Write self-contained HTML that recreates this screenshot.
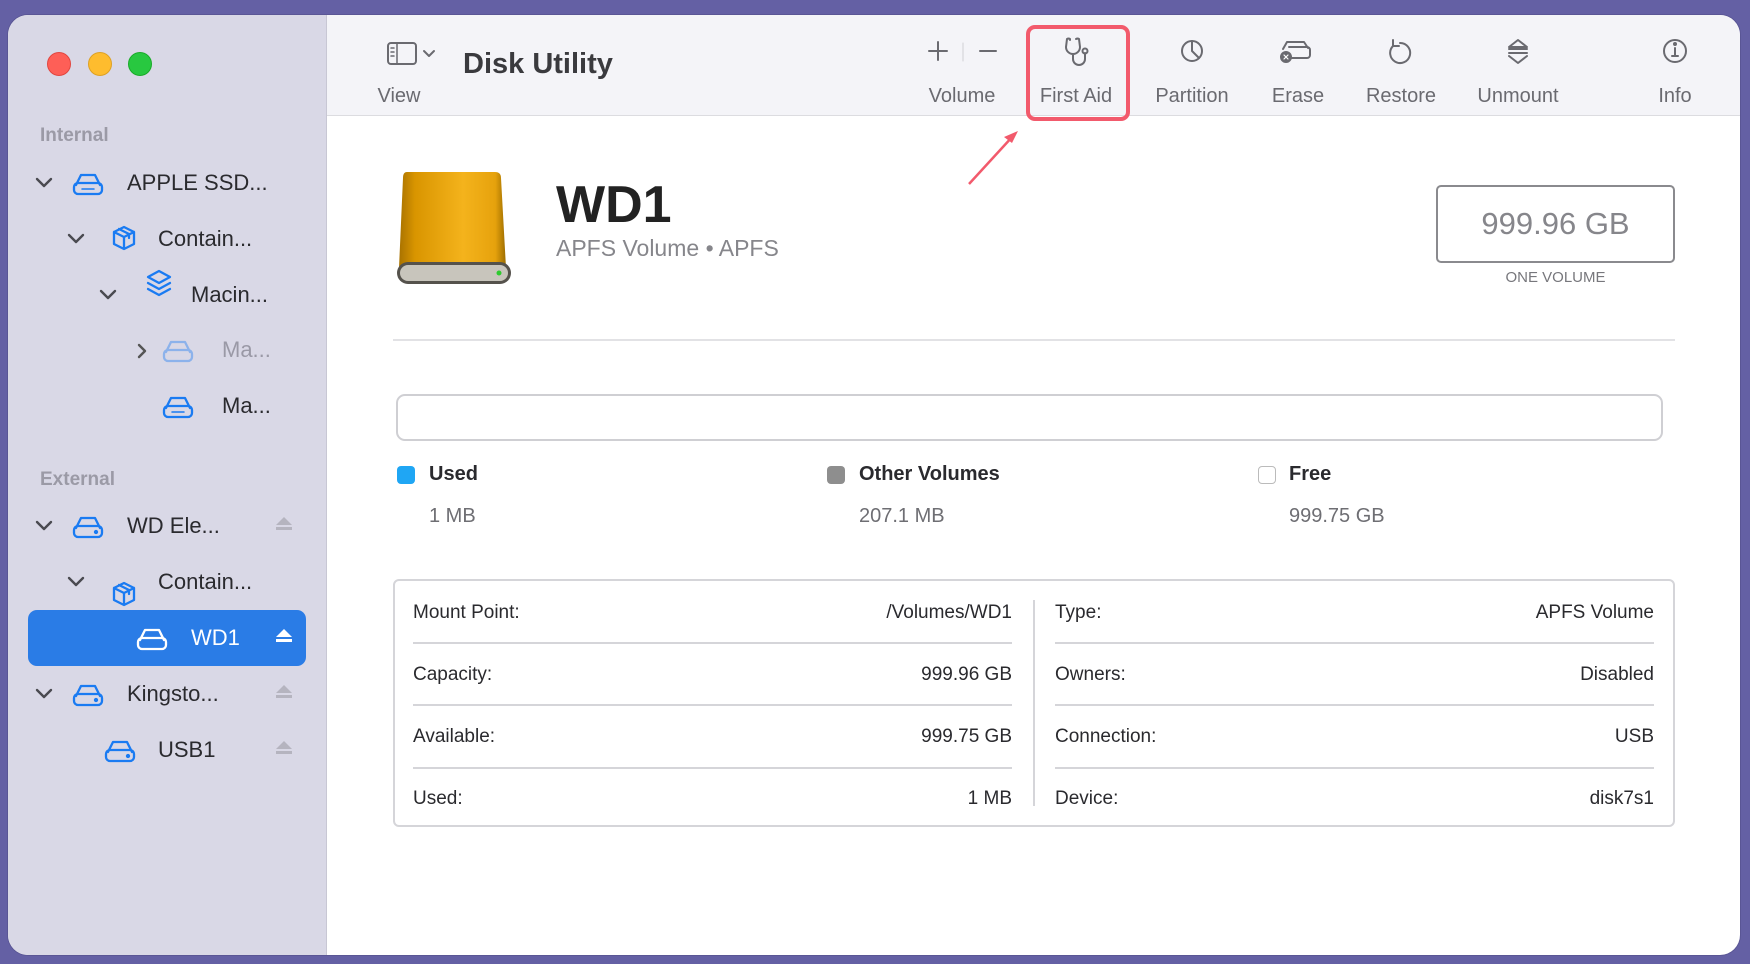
<!DOCTYPE html>
<html><head><meta charset="utf-8"><style>
*{margin:0;padding:0;box-sizing:border-box}
body{width:1750px;height:964px;background:#6460a4;font-family:"Liberation Sans",sans-serif;position:relative;overflow:hidden}
.win{position:absolute;left:8px;top:15px;width:1732px;height:940px;border-radius:20px;overflow:hidden;background:#fff;box-shadow:0 0 0 1px #5a5695}
.side{position:absolute;left:0;top:0;width:319px;height:100%;background:#d9d8e6;border-right:1px solid #c8c7d4}
.tl{position:absolute;top:37px;width:24px;height:24px;border-radius:50%}
.t{position:absolute;font-size:22px;color:#2a2a2e;white-space:nowrap}
.h{position:absolute;font-size:19px;font-weight:bold;color:#9b9aa6}
.tool{position:absolute;left:319px;top:0;right:0;height:101px;background:#f4f4f8;border-bottom:1px solid #dcdce0}
.lab{position:absolute;top:70px;font-size:20px;color:#6a6a70;transform:translateX(-50%);white-space:nowrap}
.abs{position:absolute}
.tr{position:absolute;font-size:19px;color:#2a2a2e}
</style></head><body>
<div class="win">
<div class="side">
<div class="tl" style="left:39px;background:#fe5f57;border:1px solid #e2463f"></div>
<div class="tl" style="left:80px;background:#febc2e;border:1px solid #dea123"></div>
<div class="tl" style="left:120px;background:#28c840;border:1px solid #1aab29"></div>
<div class="h" style="left:32px;top:110px">Internal</div>
<div class="h" style="left:32px;top:454px">External</div>
<div class="abs" style="left:20px;top:595px;width:278px;height:56px;background:#2a7ce6;border-radius:9px"></div>
<svg class="abs" style="left:0;top:-4px" width="319" height="940" fill="none" stroke-linecap="round" stroke-linejoin="round">
<g stroke="#4a4a50" stroke-width="2.4">
<path d="M29 168l7 7 7-7"/><path d="M61 224l7 7 7-7"/><path d="M93 280l7 7 7-7"/>
<path d="M131 334l6 6-6 6" stroke="#555"/>
<path d="M29 511l7 7 7-7"/><path d="M61 567l7 7 7-7"/><path d="M29 679l7 7 7-7"/>
</g>
<g stroke="#1a7bf2" stroke-width="2.3">
<path d="M70 172h20a4 4 0 0 1 4 4v3a4 4 0 0 1-4 4H70a4 4 0 0 1-4-4v-3a4 4 0 0 1 4-4zM68 174l5-10h14l5 10"/><path d="M74 178h12" stroke-width="1.5"/>
<path d="M106 221l10-5 10 5v12l-10 5-10-5zM106 221l10 5 10-5M116 226v12M111 218l10 5v4"/>
<path d="M140 266l11-6 11 6-11 6zM140 272l11 6 11-6M140 278l11 6 11-6"/>
<path d="M160 395h20a4 4 0 0 1 4 4v3a4 4 0 0 1-4 4h-20a4 4 0 0 1-4-4v-3a4 4 0 0 1 4-4zM158 397l5-10h14l5 10"/><path d="M164 401h12" stroke-width="1.5"/>
<g opacity=".4"><path d="M160 339h20a4 4 0 0 1 4 4v3a4 4 0 0 1-4 4h-20a4 4 0 0 1-4-4v-3a4 4 0 0 1 4-4zM158 341l5-10h14l5 10"/></g>
<path d="M70 515h20a4 4 0 0 1 4 4v3a4 4 0 0 1-4 4H70a4 4 0 0 1-4-4v-3a4 4 0 0 1 4-4zM68 517l5-10h14l5 10"/><circle cx="88" cy="521" r="1" fill="#1a7bf2"/>
<path d="M106 577l10-5 10 5v12l-10 5-10-5zM106 577l10 5 10-5M116 582v12M111 574l10 5v4"/>
<path d="M70 683h20a4 4 0 0 1 4 4v3a4 4 0 0 1-4 4H70a4 4 0 0 1-4-4v-3a4 4 0 0 1 4-4zM68 685l5-10h14l5 10"/><circle cx="88" cy="689" r="1" fill="#1a7bf2"/>
<path d="M102 739h20a4 4 0 0 1 4 4v3a4 4 0 0 1-4 4h-20a4 4 0 0 1-4-4v-3a4 4 0 0 1 4-4zM100 741l5-10h14l5 10"/><circle cx="120" cy="745" r="1" fill="#1a7bf2"/>
</g>
<path d="M134 627h20a4 4 0 0 1 4 4v3a4 4 0 0 1-4 4h-20a4 4 0 0 1-4-4v-3a4 4 0 0 1 4-4zM132 629l5-10h14l5 10" stroke="#fff" stroke-width="2.3"/>
<g fill="#b5b4bf"><path d="M268 514l8-8 8 8z"/><rect x="268" y="516" width="16" height="3"/>
<path d="M268 682l8-8 8 8z"/><rect x="268" y="684" width="16" height="3"/>
<path d="M268 738l8-8 8 8z"/><rect x="268" y="740" width="16" height="3"/></g>
<g fill="#fff"><path d="M268 626l8-8 8 8z"/><rect x="268" y="628" width="16" height="3"/></g>
</svg>
<div class="t" style="left:119px;top:155px">APPLE SSD...</div>
<div class="t" style="left:150px;top:211px">Contain...</div>
<div class="t" style="left:183px;top:267px">Macin...</div>
<div class="t" style="left:214px;top:322px;color:#9a99a6">Ma...</div>
<div class="t" style="left:214px;top:378px">Ma...</div>
<div class="t" style="left:119px;top:498px">WD Ele...</div>
<div class="t" style="left:150px;top:554px">Contain...</div>
<div class="t" style="left:183px;top:610px;color:#fff">WD1</div>
<div class="t" style="left:119px;top:666px">Kingsto...</div>
<div class="t" style="left:150px;top:722px">USB1</div>
</div>
<div class="tool">
<svg class="abs" style="left:0;top:0" width="1413" height="101" fill="none" stroke="#6a6a70" stroke-width="2" stroke-linecap="round" stroke-linejoin="round">
<g transform="translate(10,0)"><rect x="51" y="28" width="28" height="21" rx="3"/><path d="M60 28v21M54 33h3M54 37h3M54 41h3" stroke-width="1.5"/>
<path d="M87 36l5 5 5-5"/></g>
<g transform="translate(-8,0)"><path d="M619 27v18M610 36h18M661 36h16"/><path d="M644 28v18" stroke="#d0d0d5" stroke-width="1"/></g>
<g transform="translate(13,0)"><path d="M730 25v-1a3 3 0 0 0-3 0l-1 8a7 7 0 0 0 14 0l-1-8a3 3 0 0 0-3 0M733 39v5a6 6 0 0 0 12 0v-6"/><circle cx="745" cy="36" r="2.5"/></g>
<g transform="translate(12,0)"><circle cx="853" cy="36" r="10"/><path d="M853 26v10l7 7"/></g>
<g transform="translate(7,0)"><path d="M955 32h18a3 3 0 0 1 3 3v5a3 3 0 0 1-3 3h-18M949 34l4-7h17l4 6"/><circle cx="952" cy="42" r="5" fill="#6a6a70"/><path d="M950 40l4 4M954 40l-4 4" stroke="#fff" stroke-width="1.2"/></g>
<g transform="translate(23,0)"><path d="M1050 28a10 10 0 1 1-7 3M1043 25v6h6"/></g>
<g transform="translate(10,0)"><path d="M1181 25l-9 7h18zM1172 34h18M1172 38h18M1172 41l9 7 9-7"/></g>
<g transform="translate(-8,0)"><circle cx="1356" cy="36" r="11"/><path d="M1356 33v8M1353 41h6"/><circle cx="1356" cy="29" r="1" fill="#6a6a70"/></g>
</svg>
<div class="abs" style="left:136px;top:33px;font-size:29px;font-weight:bold;color:#3a3a3e">Disk Utility</div>
<div class="lab" style="left:72px">View</div>
<div class="lab" style="left:635px">Volume</div>
<div class="lab" style="left:749px">First Aid</div>
<div class="lab" style="left:865px">Partition</div>
<div class="lab" style="left:971px">Erase</div>
<div class="lab" style="left:1074px">Restore</div>
<div class="lab" style="left:1191px">Unmount</div>
<div class="lab" style="left:1348px">Info</div>
</div>
<div class="abs" style="left:1018px;top:10px;width:104px;height:96px;border:4px solid #f25a6c;border-radius:9px"></div>
<svg class="abs" style="left:0;top:0" width="1732" height="940"><path d="M961 169L1005 121" stroke="#f25a6c" stroke-width="2.5"/><path d="M1010 116l-14 6 8 6z" fill="#f25a6c"/></svg>
<svg class="abs" style="left:386px;top:153px" width="124" height="124">
<defs><linearGradient id="g" x1="0" x2="1"><stop offset="0" stop-color="#a87200"/><stop offset=".15" stop-color="#d99500"/><stop offset=".6" stop-color="#f4b31c"/><stop offset=".9" stop-color="#e6a20c"/><stop offset="1" stop-color="#9c6c00"/></linearGradient></defs>
<path d="M13 4h88q6 0 6 6l5 90H5l4-90q0-6 4-6z" fill="url(#g)"/>
<rect x="3" y="94" width="114" height="22" rx="11" fill="#55524c"/><rect x="6" y="97" width="108" height="16" rx="8" fill="#c8c5bc"/><circle cx="105" cy="105" r="2.5" fill="#2ecb2e"/>
</svg>
<div class="abs" style="left:548px;top:160px;font-size:52px;font-weight:bold;color:#222">WD1</div>
<div class="abs" style="left:548px;top:220px;font-size:23px;color:#86868b">APFS Volume • APFS</div>
<div class="abs" style="left:1428px;top:170px;width:239px;height:78px;border:2px solid #8a8a8e;border-radius:5px;font-size:31px;color:#86868b;text-align:center;line-height:74px">999.96 GB</div>
<div class="abs" style="left:1428px;top:254px;width:239px;text-align:center;font-size:15px;color:#77777c">ONE VOLUME</div>
<div class="abs" style="left:385px;top:324px;width:1282px;height:2px;background:#e2e2e5"></div>
<div class="abs" style="left:388px;top:379px;width:1267px;height:47px;border:2px solid #cfcfd3;border-radius:9px"></div>
<div class="abs" style="left:389px;top:451px;width:18px;height:18px;border-radius:4px;background:#1fa6f4"></div>
<div class="abs" style="left:819px;top:451px;width:18px;height:18px;border-radius:4px;background:#8e8e8e"></div>
<div class="abs" style="left:1250px;top:451px;width:18px;height:18px;border-radius:4px;border:1.5px solid #bbb;background:#fff"></div>
<div class="abs" style="left:421px;top:448px;font-size:20px;font-weight:bold;color:#2a2a2e">Used</div>
<div class="abs" style="left:851px;top:448px;font-size:20px;font-weight:bold;color:#2a2a2e">Other Volumes</div>
<div class="abs" style="left:1281px;top:448px;font-size:20px;font-weight:bold;color:#2a2a2e">Free</div>
<div class="abs" style="left:421px;top:490px;font-size:20px;color:#6e6e73">1 MB</div>
<div class="abs" style="left:851px;top:490px;font-size:20px;color:#6e6e73">207.1 MB</div>
<div class="abs" style="left:1281px;top:490px;font-size:20px;color:#6e6e73">999.75 GB</div>
<div class="abs" style="left:385px;top:564px;width:1282px;height:248px;border:2px solid #d5d5d9;border-radius:6px"></div>
<div class="abs" style="left:1025px;top:585px;width:2px;height:206px;background:#d5d5d9"></div>
<div class="abs" style="left:405px;top:627px;width:599px;height:2px;background:#d5d5d9"></div>
<div class="abs" style="left:405px;top:689px;width:599px;height:2px;background:#d5d5d9"></div>
<div class="abs" style="left:405px;top:752px;width:599px;height:2px;background:#d5d5d9"></div>
<div class="abs" style="left:1047px;top:627px;width:599px;height:2px;background:#d5d5d9"></div>
<div class="abs" style="left:1047px;top:689px;width:599px;height:2px;background:#d5d5d9"></div>
<div class="abs" style="left:1047px;top:752px;width:599px;height:2px;background:#d5d5d9"></div>
<div class="tr" style="left:405px;top:587px">Mount Point:</div><div class="tr" style="right:728px;top:587px">/Volumes/WD1</div>
<div class="tr" style="left:405px;top:649px">Capacity:</div><div class="tr" style="right:728px;top:649px">999.96 GB</div>
<div class="tr" style="left:405px;top:711px">Available:</div><div class="tr" style="right:728px;top:711px">999.75 GB</div>
<div class="tr" style="left:405px;top:773px">Used:</div><div class="tr" style="right:728px;top:773px">1 MB</div>
<div class="tr" style="left:1047px;top:587px">Type:</div><div class="tr" style="right:86px;top:587px">APFS Volume</div>
<div class="tr" style="left:1047px;top:649px">Owners:</div><div class="tr" style="right:86px;top:649px">Disabled</div>
<div class="tr" style="left:1047px;top:711px">Connection:</div><div class="tr" style="right:86px;top:711px">USB</div>
<div class="tr" style="left:1047px;top:773px">Device:</div><div class="tr" style="right:86px;top:773px">disk7s1</div>
</div>
</body></html>
